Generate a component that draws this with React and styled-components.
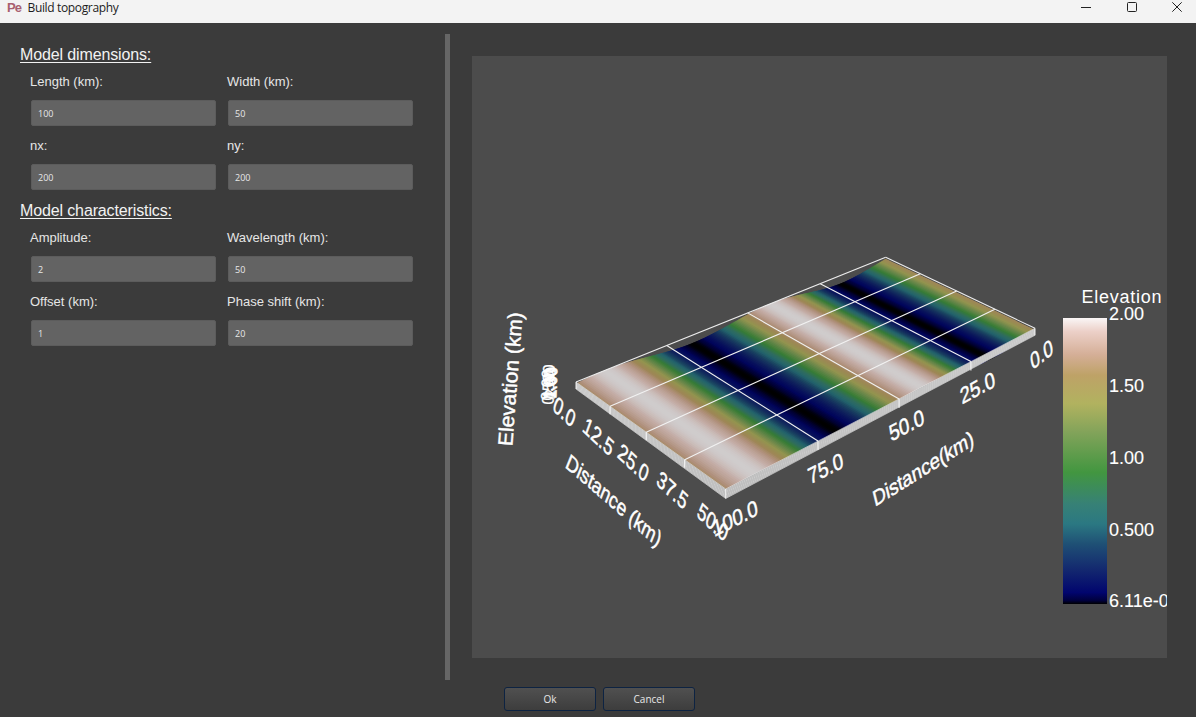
import React from 'react';
import styled, { createGlobalStyle } from 'styled-components';

const Global = createGlobalStyle`
  html, body { margin: 0; padding: 0; background: #3b3b3b; overflow: hidden; }
  * { box-sizing: border-box; }
`;
const Window = styled.div`
  width: 1196px; height: 717px; display: flex; flex-direction: column;
  background: #3b3b3b; font-family: "Liberation Sans", Arial, sans-serif; overflow: hidden;
`;
const TitleBar = styled.header`
  height: 23px; flex: none; background: #f3f3f3; display: flex; align-items: flex-start;
  justify-content: space-between; padding: 0 14px 0 7px;
`;
const TitleLeft = styled.div`display: flex; align-items: center; height: 15px;`;
const AppLogo = styled.span`
  width: 20.5px; font: bold 13px "Liberation Sans", sans-serif; color: #a8606f; letter-spacing: -1px;
`;
const Title = styled.span`font: 12px "Open Sans", sans-serif; color: #1c1c1c; letter-spacing: -0.35px;`;
const Controls = styled.div`display: flex; gap: 35.5px; margin-top: 2px;`;
const Content = styled.div`flex: 1; display: flex; min-height: 0;`;
const Left = styled.aside`width: 445px; flex: none; padding: 23px 0 0 20px;`;
const Heading = styled.h2`
  margin: 0; height: 16px; line-height: 18px; font-size: 16px; font-weight: 400; color: #f2f2f2;
  letter-spacing: -0.13px; text-decoration: underline; text-underline-offset: 2px;
`;
const Grid = styled.div`
  display: grid; grid-template-columns: 185px 185px; column-gap: 12px; padding-left: 11px; margin-bottom: 12px;
`;
const FieldLabel = styled.label`
  display: block; height: 38px; line-height: 39px; font-size: 13px; color: #e6e6e6; margin-left: -1px;
`;
const Input = styled.input`
  display: block; width: 185px; height: 26px; background: #636363; border: 1px solid #5c5c5c; border-radius: 2px;
  color: #e8e8e8; font: 9px "Open Sans", sans-serif; padding: 0 6px; outline: none;
`;
const Splitter = styled.div`width: 5px; flex: none; margin-top: 11px; background: #666;`;
const Plot = styled.div`width: 695px; height: 602px; margin: 33px 0 0 22px; background: #4c4c4c; overflow: hidden; flex: none;`;
const Footer = styled.footer`height: 37px; flex: none; display: flex; gap: 7px; padding: 7px 0 0 504px;`;
const Button = styled.button`
  width: 92px; height: 24px; border: 1px solid #0d2342; border-radius: 3px; color: #e8e8e8;
  background: linear-gradient(#505050, #3d3d3d); font: 10px "Open Sans", sans-serif; padding: 0;
`;
const PlotSvg = styled.svg`display: block;`;
const Axis = styled.text`
  font-family: "Liberation Sans", Arial, sans-serif; fill: #fff; stroke: #fff; stroke-width: ${(p) => p.$weight ?? 0.45}px;
  text-anchor: ${(p) => p.$anchor ?? 'middle'}; dominant-baseline: central;
`;

const Field = ({ label, value }) => (
  <div>
    <FieldLabel>{label}</FieldLabel>
    <Input readOnly value={value} />
  </div>
);

/* projective map of the unit square on the surface corners */
const P = [[576, 382], [885.7, 257.3], [1035, 328.3], [725.7, 489]];
const [p0, p1, p2, p3] = P;
const sx = p0[0] - p1[0] + p2[0] - p3[0], sy = p0[1] - p1[1] + p2[1] - p3[1];
const dx1 = p1[0] - p2[0], dx2 = p3[0] - p2[0], dy1 = p1[1] - p2[1], dy2 = p3[1] - p2[1];
const det = dx1 * dy2 - dx2 * dy1;
const g = (sx * dy2 - dx2 * sy) / det, h = (dx1 * sy - sx * dy1) / det;
const proj = (u, v) => {
  const w = g * u + h * v + 1;
  return [
    ((p1[0] - p0[0] + g * p1[0]) * u + (p3[0] - p0[0] + h * p3[0]) * v + p0[0]) / w,
    ((p1[1] - p0[1] + g * p1[1]) * u + (p3[1] - p0[1] + h * p3[1]) * v + p0[1]) / w,
  ];
};
const elev = (u) => 0.5 + 0.5 * Math.cos((2 * Math.PI * (u - 0.075)) / 0.5);
/* the lit surface holds its extremes a little longer than the plain colour bar */
const widen = (e) => 0.78 * e + 0.22 * (0.5 - 0.5 * Math.cos(Math.PI * e));

const STOPS = [
  [0, [0, 0, 0]], [0.012, [0, 0, 60]], [0.04, [1, 5, 110]], [0.12, [19, 40, 111]], [0.21, [31, 80, 117]],
  [0.28, [43, 120, 130]], [0.35, [55, 129, 118]], [0.46, [66, 150, 64]], [0.6, [130, 163, 90]],
  [0.7, [177, 178, 95]], [0.8, [190, 162, 103]], [0.87, [212, 174, 150]], [0.953, [236, 208, 200]], [1, [250, 246, 246]],
];
const colorAt = (t, k = 1) => {
  let i = 0;
  while (i < STOPS.length - 2 && t > STOPS[i + 1][0]) i++;
  const [a, ca] = STOPS[i], [b, cb] = STOPS[i + 1];
  const f = Math.min(1, Math.max(0, (t - a) / (b - a)));
  const c = ca.map((x, j) => Math.round((x + (cb[j] - x) * f) * k));
  return `rgb(${c.join(',')})`;
};

const N = 220, DROP = 8;
const strips = Array.from({ length: N }, (_, i) => {
  const u0 = i / N, u1 = Math.min(1, (i + 2) / N), e0 = elev(u0), e1 = elev(u1);
  const pts = [[u0, 0, e0], [u1, 0, e1], [u1, 1, e1], [u0, 1, e0]]
    .map(([u, v, e]) => { const q = proj(u, v); return `${q[0].toFixed(2)},${(q[1] + DROP * (1 - e)).toFixed(2)}`; })
    .join(' ');
  return { pts, color: colorAt(widen(elev((i + 0.5) / N)), 0.83) };
});

const line = (a, b, props) => <line x1={a[0]} y1={a[1]} x2={b[0]} y2={b[1]} {...props} />;
const Wall = ({ from, to, h0, h1 }) => {
  const rows = Array.from({ length: 9 }, (_, i) => i / 8);
  return (
    <g>
      <polygon points={`${from[0]},${from[1]} ${to[0]},${to[1]} ${to[0]},${to[1] + h1} ${from[0]},${from[1] + h0}`} fill="#9a9a9a" />
      {rows.map((r) => (
        <line key={r} x1={from[0]} y1={from[1] + h0 * r} x2={to[0]} y2={to[1] + h1 * r} stroke="#f6f6f6" strokeWidth="0.55" />
      ))}
    </g>
  );
};

/* rot: baseline angle; lean: angle of the glyph stems; sc: height scale */
const label = (x, y, rot, lean, sc) => {
  const a = (rot * Math.PI) / 180, b = (lean * Math.PI) / 180;
  return `matrix(${Math.cos(a)} ${Math.sin(a)} ${-Math.sin(b) * sc} ${Math.cos(b) * sc} ${x} ${y})`;
};

const leftTicks = [['0.0', 564.5, 411.5], ['12.5', 598.5, 436.5], ['25.0', 633.5, 462.5], ['37.5', 672.5, 490], ['50.0', 713, 522]];
const rightTicks = [['0.0', 1041.5, 354, -38], ['25.0', 977.5, 387.5, -29], ['50.0', 906.5, 425, -28], ['75.0', 825.5, 468, -27], ['100.0', 735, 518, -27]];
const elevTicks = [[547, 385], [548, 384.5], [549, 384], [550, 383], [551, 382.5]];
const elevText = ['0.00', '0.500', '1.00', '1.50', '2.00'];
const barLabels = [['2.00', 314], ['1.50', 386], ['1.00', 458], ['0.500', 530], ['6.11e-01', 601]];

const Surface = () => (
  <PlotSvg width="695" height="602" viewBox="472 56 695 602">
    <defs>
      <linearGradient id="bar" x1="0" y1="1" x2="0" y2="0">
        {STOPS.map(([t]) => <stop key={t} offset={t} stopColor={colorAt(t)} />)}
      </linearGradient>
    </defs>
    {strips.map((s, i) => <polygon key={i} points={s.pts} fill={s.color} />)}
    <Wall from={p0} to={p3} h0={7} h1={9.5} />
    <Wall from={p3} to={p2} h0={9.5} h1={7} />
    {[0.25, 0.5, 0.75].map((t) => (
      <g key={t} stroke="#f2f2f2" strokeWidth="1.1">
        {line(proj(t, 0), proj(t, 1))}
        {line(proj(0, t), proj(1, t))}
      </g>
    ))}
    <g stroke="#ececec" strokeWidth="1.1">
      {line(p0, p1)}
      {line(p1, p2)}
    </g>
    {[0.25, 0.5, 0.75].map((t) => {
      const a = proj(0, t), b = proj(t, 1);
      return (
        <g key={t} stroke="#fff" strokeWidth="0.9">
          {line(a, [a[0], a[1] + 8])}
          {line(b, [b[0], b[1] + 9])}
        </g>
      );
    })}
    <g stroke="#fff" strokeWidth="0.9">{line(p3, [p3[0], p3[1] + 9.5])}{line(p0, [p0[0], p0[1] + 7])}{line(p2, [p2[0], p2[1] + 7])}</g>

    {leftTicks.map(([t, x, y]) => (
      <Axis key={t} fontSize="20" transform={label(x, y, 43, 20, 1.1)}>{t}</Axis>
    ))}
    {rightTicks.map(([t, x, y, r]) => (
      <Axis key={t} fontSize="20" transform={label(x, y, r, -12, 1.1)}>{t}</Axis>
    ))}
    {elevTicks.map(([x, y], i) => (
      <Axis key={i} fontSize="16" $weight={0.2} transform={label(x, y, -88, -88, 1.05)}>{elevText[i]}</Axis>
    ))}
    <Axis fontSize="20" transform={label(614, 500, 41, 22, 1.05)}>Distance (km)</Axis>
    <Axis fontSize="20" transform={label(923, 468, -32, -14, 1.05)}>Distance(km)</Axis>
    <Axis fontSize="21" transform={label(510, 379, -85.5, -85.5, 0.98)}>Elevation (km)</Axis>

    <rect x="1063" y="318" width="44" height="286" fill="url(#bar)" />
    <Axis x="1121.5" y="297" fontSize="18" textLength="80" $weight={0}>Elevation</Axis>
    {barLabels.map(([t, y]) => (
      <Axis key={t} x="1109" y={y} fontSize="18" $anchor="start" $weight={0.1}>{t}</Axis>
    ))}
  </PlotSvg>
);

export default function App() {
  return (
    <Window>
      <Global />
      <TitleBar>
        <TitleLeft>
          <AppLogo>Pe</AppLogo>
          <Title>Build topography</Title>
        </TitleLeft>
        <Controls>
          <svg width="10" height="10" viewBox="0 0 10 10"><path d="M0 5.5H10" stroke="#222" fill="none" /></svg>
          <svg width="10" height="10" viewBox="0 0 10 10"><rect x=".5" y=".5" width="9" height="9" rx="1" stroke="#222" fill="none" /></svg>
          <svg width="10" height="10" viewBox="0 0 10 10"><path d="M.3.3 9.7 9.7M9.7.3.3 9.7" stroke="#222" fill="none" /></svg>
        </Controls>
      </TitleBar>
      <Content>
        <Left>
          <Heading>Model dimensions:</Heading>
          <Grid>
            <Field label="Length (km):" value="100" />
            <Field label="Width (km):" value="50" />
            <Field label="nx:" value="200" />
            <Field label="ny:" value="200" />
          </Grid>
          <Heading>Model characteristics:</Heading>
          <Grid>
            <Field label="Amplitude:" value="2" />
            <Field label="Wavelength (km):" value="50" />
            <Field label="Offset (km):" value="1" />
            <Field label="Phase shift (km):" value="20" />
          </Grid>
        </Left>
        <Splitter />
        <Plot><Surface /></Plot>
      </Content>
      <Footer>
        <Button>Ok</Button>
        <Button>Cancel</Button>
      </Footer>
    </Window>
  );
}
